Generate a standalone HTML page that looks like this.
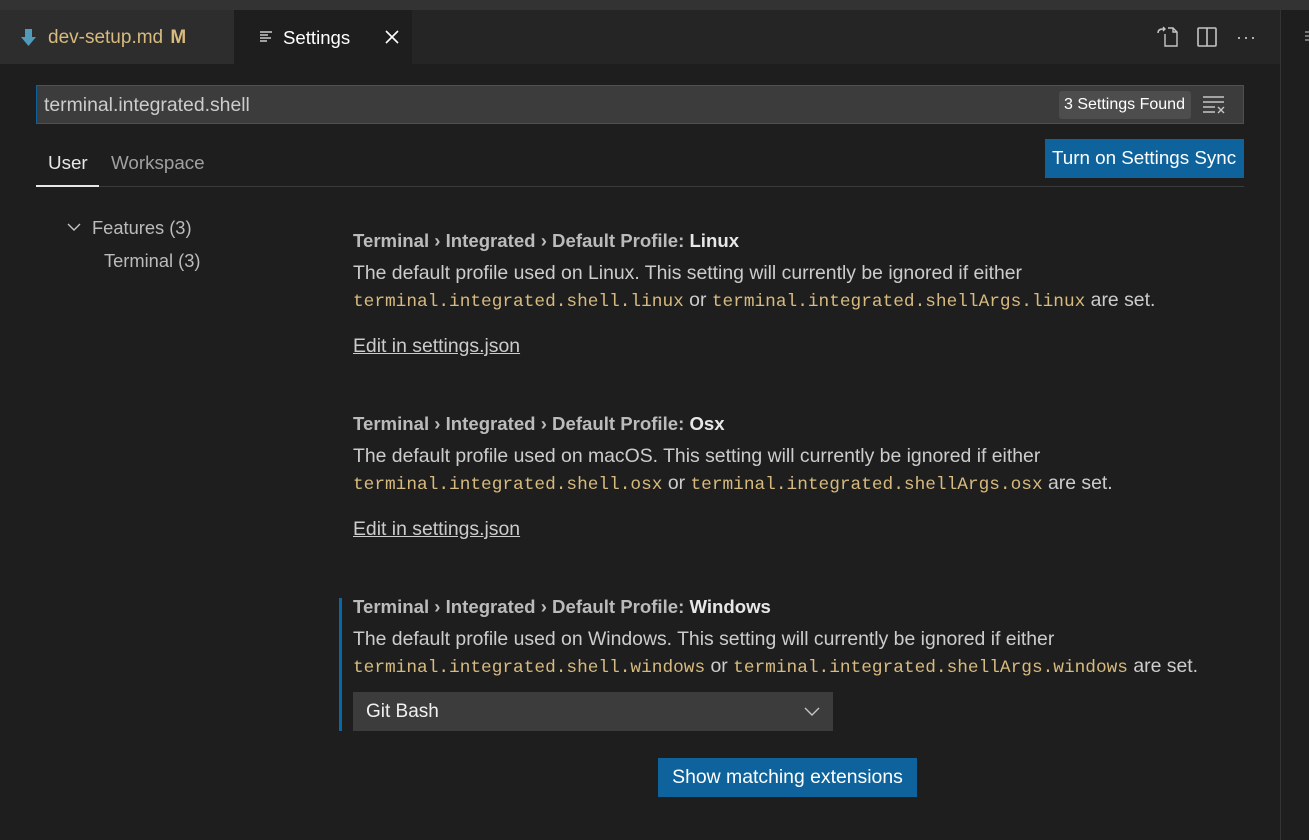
<!DOCTYPE html>
<html><head><meta charset="utf-8"><style>
*{margin:0;padding:0;box-sizing:border-box}
body{width:1309px;height:840px;background:#1e1e1e;font-family:"Liberation Sans",sans-serif;color:#cccccc;position:relative;overflow:hidden}
.abs{position:absolute;white-space:nowrap}
.top{left:0;top:0;width:1309px;height:10px;background:#333333}
.tabs{left:0;top:10px;width:1280px;height:54px;background:#252526}
.sep{left:1280px;top:10px;width:1px;height:830px;background:#333}
.tab1{left:0;top:10px;width:234px;height:54px;background:#2d2d2d}
.tab2{left:234px;top:10px;width:178px;height:54px;background:#1e1e1e}
.t{font-size:19.4px;line-height:24px}
.title{font-size:18.6px;line-height:24px;font-weight:bold;color:#bbbbbb}
.title b{color:#e7e7e7}
.code{font-family:"Liberation Mono",monospace;color:#d7ba7d;font-size:17.8px}
.link{text-decoration:underline;color:#cccccc}
</style></head><body>
<div class="abs top"></div>
<div class="abs tabs"></div>
<div class="abs tab1"></div>
<div class="abs tab2"></div>
<div class="abs sep"></div>
<svg class="abs" style="left:20px;top:28px" width="18" height="20" viewBox="0 0 18 20"><path d="M5 1h7v8h4l-7.5 9L1 9h4z" fill="#519aba"/></svg>
<div class="abs t" style="left:48px;top:26px;color:#d7ba7d;font-size:19px">dev-setup.md <b style="margin-left:2px">M</b></div>
<svg class="abs" style="left:259px;top:30px" width="14" height="14" viewBox="0 0 14 14" stroke="#ccc" stroke-width="1.4"><path d="M1 2h12M1 5h8M1 8h11M1 11h7"/></svg>
<div class="abs t" style="left:283px;top:26px;color:#fff;font-size:18.6px">Settings</div>
<svg class="abs" style="left:385px;top:30px" width="14" height="14" viewBox="0 0 14 14" stroke="#fff" stroke-width="1.6"><path d="M1 1l12 12M13 1L1 13"/></svg>
<svg class="abs" style="left:1156px;top:26px" width="24" height="22" viewBox="0 0 24 22" fill="none" stroke="#c5c5c5" stroke-width="1.4"><path d="M9 8v12h12V6l-4-4h-5M17 2v4h4M2 7c0-3 2-4 5-4h2M7 1l2 2-2 2"/></svg>
<svg class="abs" style="left:1197px;top:27px" width="20" height="20" viewBox="0 0 20 20" fill="none" stroke="#c5c5c5" stroke-width="1.6"><rect x="1" y="1" width="18" height="18" rx="1"/><path d="M10 1v18"/></svg>
<div class="abs" style="left:1236px;top:27px;color:#c5c5c5;font-size:18px;letter-spacing:1px">···</div>
<svg class="abs" style="left:1305px;top:30px" width="6" height="14" viewBox="0 0 6 14" stroke="#ccc"><path d="M0 2h6M0 6h6M0 10h6"/></svg>

<div class="abs" style="left:36px;top:85px;width:1208px;height:39px;background:#3c3c3c;border:1px solid #0e639c"></div>
<div class="abs t" style="left:44px;top:93px;color:#cccccc">terminal.integrated.shell</div>
<div class="abs" style="left:1059px;top:91px;width:132px;height:28px;background:#4d4d4d;border-radius:3px"></div>
<div class="abs" style="left:1064px;top:96px;font-size:16px;color:#fff">3 Settings Found</div>
<svg class="abs" style="left:1202px;top:96px" width="24" height="18" viewBox="0 0 24 18" stroke="#c5c5c5" stroke-width="1.4"><path d="M1 1h21M1 6h21M1 11h12M1 16h12M16 11l6 6M22 11l-6 6"/></svg>

<div class="abs t" style="left:48px;top:151px;color:#e7e7e7;font-size:18.8px">User</div>
<div class="abs t" style="left:111px;top:151px;color:#a0a0a0;font-size:18.8px">Workspace</div>
<div class="abs" style="left:36px;top:186px;width:1208px;height:1px;background:#3b3b3b"></div>
<div class="abs" style="left:36px;top:185px;width:63px;height:2px;background:#e7e7e7"></div>
<div class="abs" style="left:1045px;top:139px;width:199px;height:39px;background:#0e639c"></div>
<div class="abs" style="left:1052px;top:147px;font-size:18.8px;color:#fff">Turn on Settings Sync</div>

<svg class="abs" style="left:67px;top:222px" width="14" height="10" viewBox="0 0 14 10" fill="none" stroke="#c5c5c5" stroke-width="1.4"><path d="M1 2l6 6 6-6"/></svg>
<div class="abs t" style="left:92px;top:216px;color:#bbbbbb;font-size:18.3px">Features (3)</div>
<div class="abs t" style="left:104px;top:249px;color:#bbbbbb;font-size:18.3px">Terminal (3)</div>

<div class="abs title" style="left:353px;top:229px">Terminal › Integrated › Default Profile: <b>Linux</b></div>
<div class="abs t" style="left:353px;top:261px">The default profile used on Linux. This setting will currently be ignored if either</div>
<div class="abs t" style="left:353px;top:288px"><span class="code">terminal.integrated.shell.linux</span> or <span class="code">terminal.integrated.shellArgs.linux</span> are set.</div>
<div class="abs t link" style="left:353px;top:334px">Edit in settings.json</div>

<div class="abs title" style="left:353px;top:412px">Terminal › Integrated › Default Profile: <b>Osx</b></div>
<div class="abs t" style="left:353px;top:444px">The default profile used on macOS. This setting will currently be ignored if either</div>
<div class="abs t" style="left:353px;top:471px"><span class="code">terminal.integrated.shell.osx</span> or <span class="code">terminal.integrated.shellArgs.osx</span> are set.</div>
<div class="abs t link" style="left:353px;top:517px">Edit in settings.json</div>

<div class="abs" style="left:339px;top:598px;width:3px;height:133px;background:#007acc;opacity:.8"></div>
<div class="abs title" style="left:353px;top:595px">Terminal › Integrated › Default Profile: <b>Windows</b></div>
<div class="abs t" style="left:353px;top:627px">The default profile used on Windows. This setting will currently be ignored if either</div>
<div class="abs t" style="left:353px;top:654px"><span class="code">terminal.integrated.shell.windows</span> or <span class="code">terminal.integrated.shellArgs.windows</span> are set.</div>
<div class="abs" style="left:353px;top:692px;width:480px;height:39px;background:#3c3c3c"></div>
<div class="abs t" style="left:366px;top:700px;color:#f0f0f0;font-size:19px">Git Bash</div>
<svg class="abs" style="left:804px;top:707px" width="16" height="10" viewBox="0 0 16 10" fill="none" stroke="#c5c5c5" stroke-width="1.4"><path d="M1 1l7 7 7-7"/></svg>

<div class="abs" style="left:658px;top:758px;width:259px;height:39px;background:#0e639c"></div>
<div class="abs" style="left:658px;top:766px;width:259px;text-align:center;font-size:19.4px;color:#fff">Show matching extensions</div>
</body></html>
